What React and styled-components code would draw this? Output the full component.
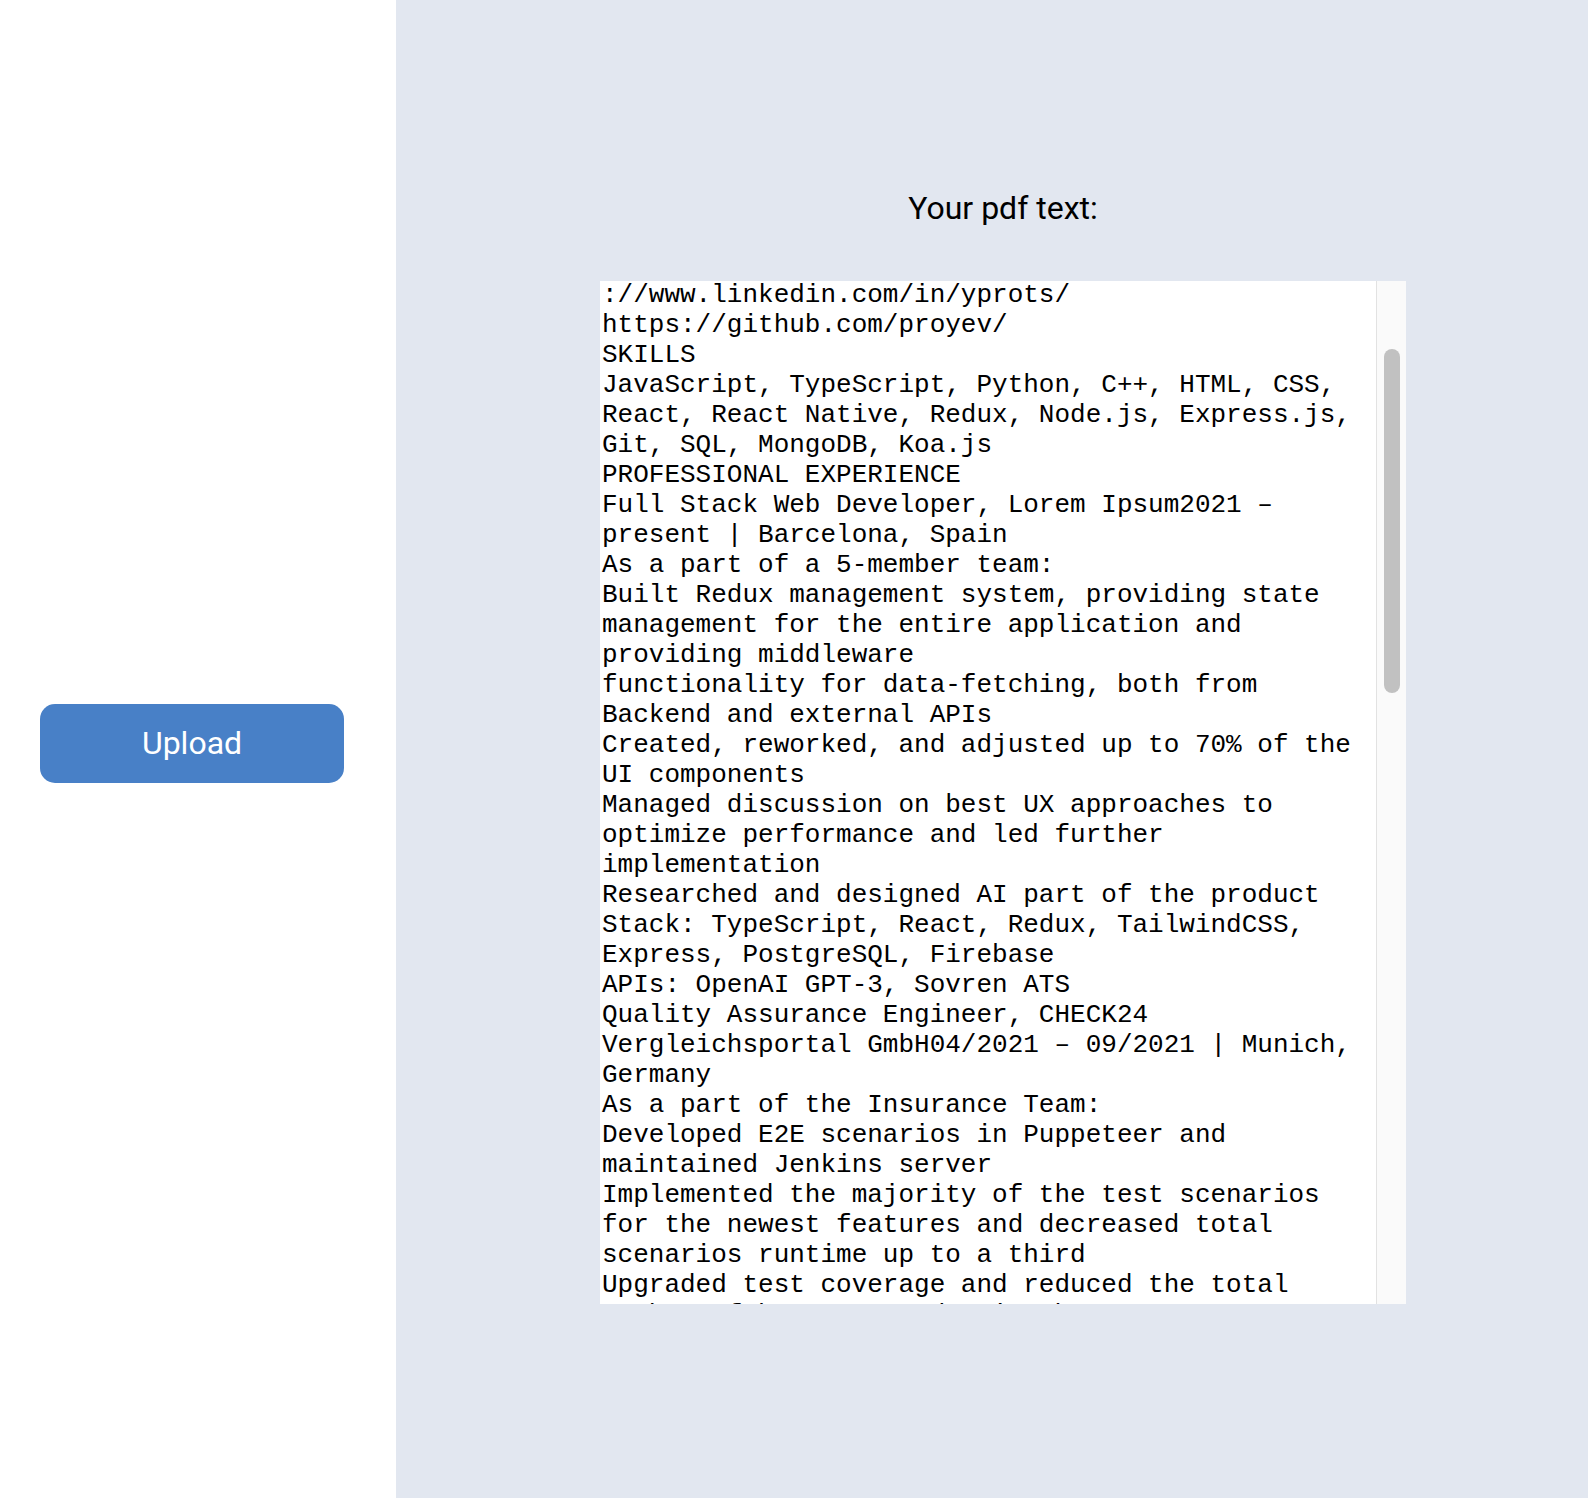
import React, { useLayoutEffect, useRef } from "react";
import styled, { createGlobalStyle } from "styled-components";

const GlobalStyle = createGlobalStyle`
  html, body {
    margin: 0;
    padding: 0;
    background: #ffffff;
  }
  body {
    font-family: Roboto, "Noto Sans", "Liberation Sans", sans-serif;
  }
`;

const Page = styled.div`
  display: flex;
  min-height: 1498px;
  width: 100%;
`;

const Sidebar = styled.aside`
  flex: 0 0 396px;
  background: #ffffff;
  display: flex;
  align-items: center;
  padding: 0 0 11px 40px;
  box-sizing: border-box;
`;

const UploadButton = styled.button`
  width: 304px;
  height: 79px;
  border: none;
  border-radius: 15px;
  background: #4880c7;
  color: #ffffff;
  font-family: Roboto, "Noto Sans", sans-serif;
  font-size: 32px;
  font-weight: 400;
  cursor: pointer;
  padding: 0 0 2px;
`;

const Main = styled.main`
  flex: 1;
  background: #e2e7f0;
  display: flex;
  flex-direction: column;
  align-items: center;
  padding: 189px 0 0 22px;
  box-sizing: border-box;
`;

const Heading = styled.h2`
  margin: 0 0 54px;
  font-family: Roboto, "Noto Sans", sans-serif;
  font-size: 32px;
  font-weight: 400;
  line-height: normal;
  color: #000000;
`;

const TextBox = styled.div`
  display: flex;
  width: 806px;
  height: 1023px;
  background: #ffffff;
`;

const PdfText = styled.textarea`
  flex: 1;
  min-width: 0;
  height: 100%;
  box-sizing: border-box;
  border: none;
  outline: none;
  resize: none;
  margin: 0;
  padding: 2px;
  background: #ffffff;
  color: #000000;
  font-family: "Liberation Mono", "Courier New", monospace;
  font-size: 26px;
  line-height: 30px;
  overflow: hidden;
  white-space: pre-wrap;
`;

const ScrollTrack = styled.div`
  flex: 0 0 30px;
  box-sizing: border-box;
  height: 100%;
  background: #fafafa;
  border-left: 1px solid #e2e2e2;
  padding: ${(p) => p.$offset}px 6px 0 7px;
`;

const ScrollThumb = styled.div`
  height: ${(p) => p.$size}px;
  border-radius: 8px;
  background: #c1c1c1;
`;

const pdfText = [
  "Yevhenii Protsenko",
  "Full Stack Web Developer",
  "Barcelona, Spain",
  "+34 612 345 678",
  "yevhenii.protsenko@gmail.com",
  "https://yprots.dev/",
  "https",
  "://www.linkedin.com/in/yprots/",
  "https://github.com/proyev/",
  "SKILLS",
  "JavaScript, TypeScript, Python, C++, HTML, CSS, React, React Native, Redux, Node.js, Express.js, Git, SQL, MongoDB, Koa.js",
  "PROFESSIONAL EXPERIENCE",
  "Full Stack Web Developer, Lorem Ipsum2021 \u2013 present | Barcelona, Spain",
  "As a part of a 5-member team:",
  "Built Redux management system, providing state management for the entire application and providing middleware",
  "functionality for data-fetching, both from Backend and external APIs",
  "Created, reworked, and adjusted up to 70% of the UI components",
  "Managed discussion on best UX approaches to optimize performance and led further implementation",
  "Researched and designed AI part of the product",
  "Stack: TypeScript, React, Redux, TailwindCSS, Express, PostgreSQL, Firebase",
  "APIs: OpenAI GPT-3, Sovren ATS",
  "Quality Assurance Engineer, CHECK24 Vergleichsportal GmbH04/2021 \u2013 09/2021 | Munich, Germany",
  "As a part of the Insurance Team:",
  "Developed E2E scenarios in Puppeteer and maintained Jenkins server",
  "Implemented the majority of the test scenarios for the newest features and decreased total scenarios runtime up to a third",
  "Upgraded test coverage and reduced the total number of bugs on production by 40%",
  "Stack: JavaScript, Puppeteer, Jenkins, Jira",
  "QA Automation Intern, Lorem Ipsum GmbH01/2020 \u2013 03/2021 | Munich, Germany",
  "Wrote unit and integration tests for the core booking module",
  "Set up CI pipeline for automated regression testing",
  "Documented test cases and reported defects in Jira",
  "Stack: Python, Selenium, pytest, GitLab CI",
  "PROJECTS",
  "Resume Analyzer \u2013 web application that parses PDF resumes and provides AI-generated feedback",
  "Stack: React, Node.js, Express, OpenAI API, pdf.js",
  "Task Manager \u2013 cross-platform mobile app for team task tracking with push notifications",
  "Stack: React Native, Redux, Firebase",
  "Weather Dashboard \u2013 responsive dashboard with charts and geolocation",
  "Stack: TypeScript, React, Chart.js, OpenWeather API",
  "EDUCATION",
  "Bachelor of Computer Science, Technical University of Munich2016 \u2013 2020 | Munich, Germany",
  "Relevant coursework: Algorithms and Data Structures, Databases, Software Engineering, Computer Networks",
  "Full Stack Web Development Bootcamp, Lorem Academy2021 | Barcelona, Spain",
  "CERTIFICATIONS",
  "Meta Front-End Developer Professional Certificate",
  "AWS Certified Cloud Practitioner",
  "LANGUAGES",
  "English \u2013 C1",
  "German \u2013 B2",
  "Spanish \u2013 B1",
  "Ukrainian \u2013 Native",
  "Russian \u2013 Native",
  "ACHIEVEMENTS",
  "Winner of Lorem Hackathon 2022 \u2013 built an AI assistant for recruiters in 48 hours",
  "Speaker at Barcelona JS Meetup \u2013 talk on state management in large React applications",
  "Contributor to several open-source React component libraries",
  "VOLUNTEERING",
  "Mentor, Lorem Code Club2022 \u2013 present | Barcelona, Spain",
  "Teaching basics of web development to teenagers and helping them build their first projects",
  "Organizing monthly coding workshops and code reviews",
  "INTERESTS",
  "Open source, machine learning, hiking, photography",
  "REFERENCES",
  "Available upon request",
].join("\n");

export default function App() {
  const textRef = useRef(null);

  useLayoutEffect(() => {
    if (textRef.current) {
      textRef.current.scrollTop = 213;
    }
  }, []);

  return (
    <>
      <GlobalStyle />
      <Page>
        <Sidebar>
          <UploadButton type="button">Upload</UploadButton>
        </Sidebar>
        <Main>
          <Heading>Your pdf text:</Heading>
          <TextBox>
            <PdfText ref={textRef} value={pdfText} readOnly spellCheck={false} />
            <ScrollTrack $offset={68}>
              <ScrollThumb $size={344} />
            </ScrollTrack>
          </TextBox>
        </Main>
      </Page>
    </>
  );
}
